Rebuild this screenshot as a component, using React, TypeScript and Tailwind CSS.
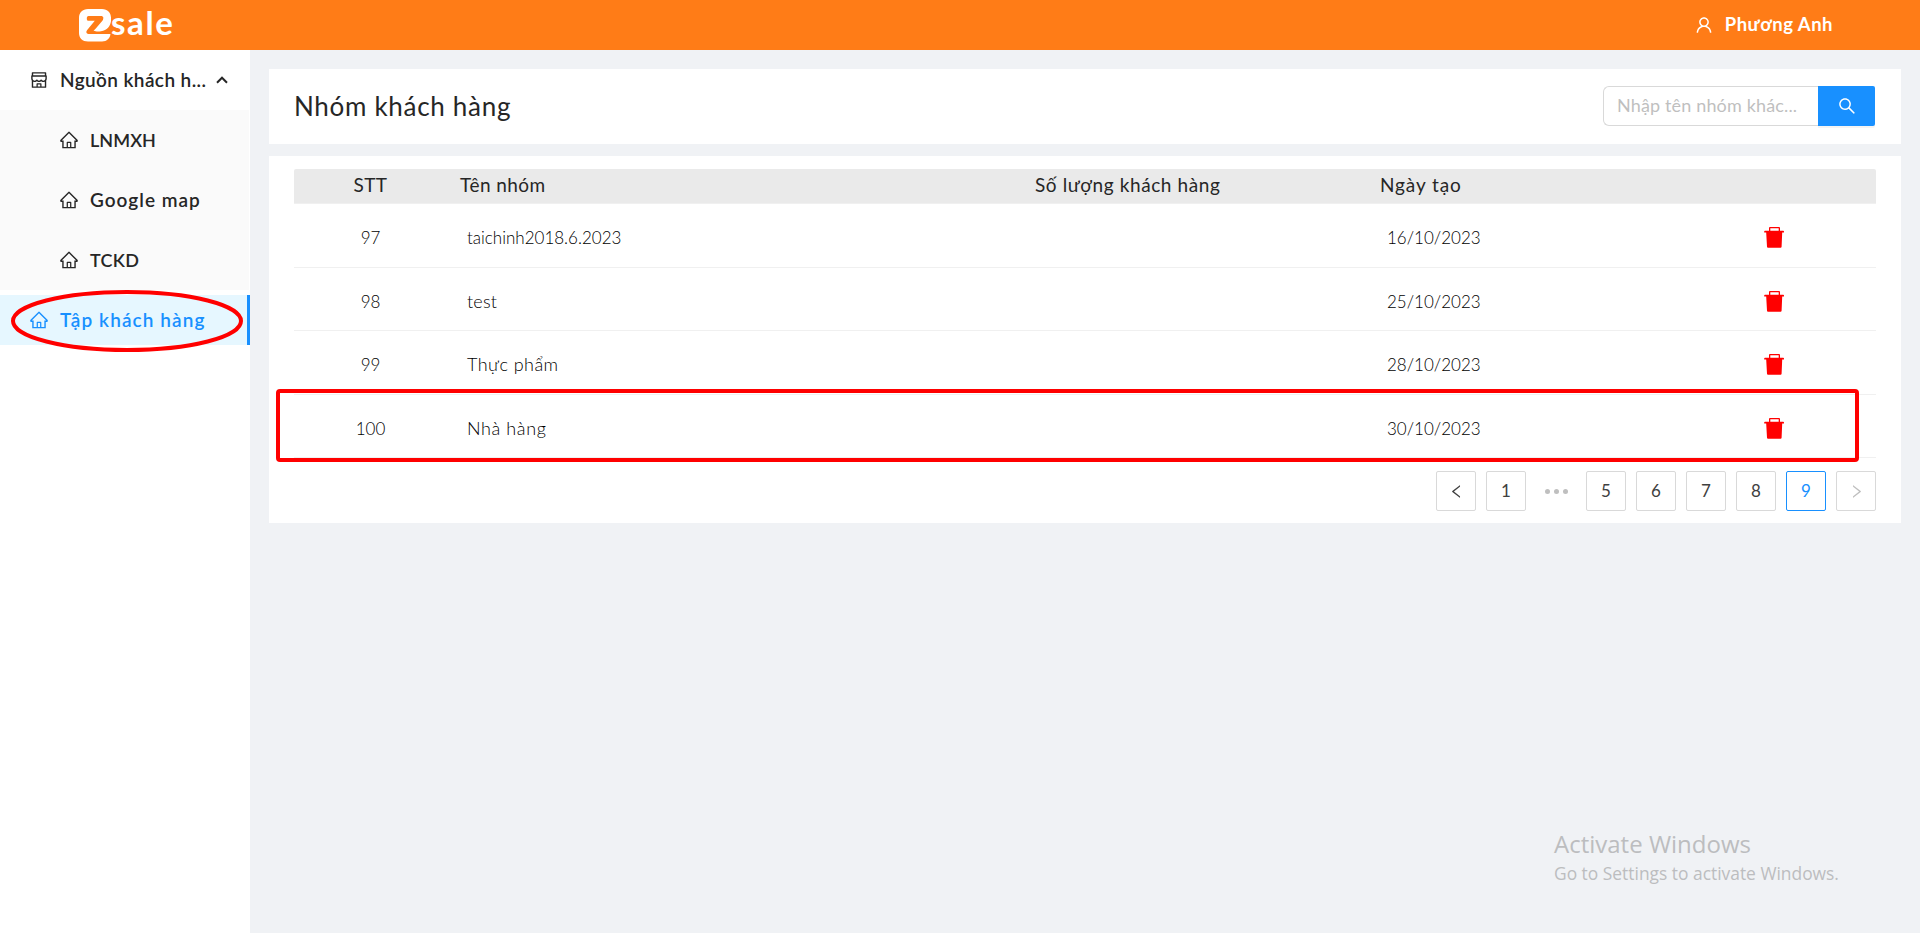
import type { ReactNode } from "react";
import {
  AiOutlineHome,
  AiOutlineLeft,
  AiOutlineRight,
  AiOutlineSearch,
  AiOutlineShop,
  AiOutlineUser,
} from "react-icons/ai";

const rows = [
  { id: 97, name: "taichinh2018.6.2023", date: "16/10/2023", nameClass: "tracking-normal" },
  { id: 98, name: "test", date: "25/10/2023", nameClass: "text-[18px] tracking-[0.2px]" },
  { id: 99, name: "Thực phẩm", date: "28/10/2023", nameClass: "text-[18px] tracking-[0.45px]" },
  { id: 100, name: "Nhà hàng", date: "30/10/2023", nameClass: "text-[18px] tracking-[0.6px]" },
];

const subItems = [
  { label: "LNMXH", className: "tracking-[0.05px]" },
  { label: "Google map", className: "text-[19px] tracking-[1px]" },
  { label: "TCKD", className: "tracking-[0.3px]" },
];

function TrashIcon() {
  return (
    <svg width="20" height="21" viewBox="0 0 20 21" fill="#ff0000">
      <path
        fillRule="evenodd"
        d="M5 1Q5 0 6 0H15Q16 0 16 1V3.700H19.200Q20 3.700 20 4.500V5.500H18.200L17.600 19.700Q17.500 20.700 16.600 20.700H4Q3.100 20.700 3 19.700L2.200 5.500H.2V4.500Q.2 3.700 1 3.700H5ZM6.300 1.300V3.700H14.700V1.300Z"
      />
    </svg>
  );
}

function Logo() {
  return (
    <div className="flex h-[50px] items-start pl-[79px] text-white">
      <svg className="mt-[9px] shrink-0" width="32" height="33" viewBox="0 0 32 33">
        <path
          fill="#fff"
          d="M9 0H23C28.500 0 32 3.500 32 9C32 16.500 28 20.500 22.500 24.800H31.500C31 29.500 28 32.500 23 32.500H9C3.500 32.500 0 29 0 24V9C0 3.500 3.500 0 9 0Z"
        />
        <path
          fill="#ff7c17"
          d="M9.500 7H22C24.600 7 25.200 9.500 23.600 11.400L15.500 21C20 21 23.500 20 26.500 17.500C29 15.500 30.500 14 32 11.500V25H9.500C7.200 25 6.800 22.800 8.200 21.100L15.800 11.800H9.500C8.300 11.800 7.800 10.800 7.800 9.400C7.800 8 8.300 7 9.500 7Z"
        />
        <path fill="#fff" d="M25 8H32V12C31.500 17 28 21.300 22 22.300C18.500 22.900 16.500 22.300 14.500 22L16 20.500C20 19 23.500 15 25 8Z" />
      </svg>
      <span className="mt-[2px] text-[33px] leading-[40px] font-bold tracking-[1.6px]">sale</span>
    </div>
  );
}

function PageButton({ children, className = "border-[#d9d9d9] text-[#404040]" }: { children: ReactNode; className?: string }) {
  return (
    <button className={`flex h-10 w-10 items-center justify-center rounded-[2px] border bg-white text-[17px] font-normal ${className}`}>
      {children}
    </button>
  );
}

export default function App() {
  return (
    <div className="relative flex h-[933px] w-[1920px] flex-col overflow-hidden bg-[#f0f2f5] font-['Lato','Noto_Sans',sans-serif] text-[#262626]">
      <header className="flex h-[50px] shrink-0 items-center justify-between bg-[#ff7c17] text-white">
        <Logo />
        <div className="flex items-center gap-[11px] pr-[87px] pb-px">
          <AiOutlineUser className="size-5" />
          <span className="text-[18.5px] font-bold tracking-[0.5px]">Phương Anh</span>
        </div>
      </header>

      <div className="flex min-h-0 flex-1">
        <aside className="relative w-[250px] shrink-0 bg-white text-[18px] font-semibold">
          <div className="flex h-[60px] items-center pl-[29px]">
            <AiOutlineShop className="size-5" />
            <span className="ml-[11px] w-[150px] text-[19px] tracking-[0.4px] whitespace-nowrap">Nguồn khách h...</span>
            <svg className="ml-[6px]" width="12" height="8" viewBox="0 0 12 8" fill="none" stroke="#262626" strokeWidth="2">
              <path d="M1 6.700L6 1.700L11 6.700" />
            </svg>
          </div>
          <div className="w-[249px] bg-[#fafafa]">
            {subItems.map((item) => (
              <div key={item.label} className="flex h-[60px] items-center gap-[11px] pl-[59px]">
                <AiOutlineHome className="size-5" />
                <span className={item.className}>{item.label}</span>
              </div>
            ))}
          </div>
          <div className="mt-[5px] flex h-[50px] items-center gap-[11px] border-r-[3px] border-[#1890ff] bg-[#e6f7ff] pl-[29px] text-[#1890ff]">
            <AiOutlineHome className="size-5" />
            <span className="text-[19px] tracking-[1.1px]">Tập khách hàng</span>
          </div>
          <svg className="absolute top-[239px] left-[10px]" width="234" height="64" fill="none">
            <ellipse cx="117" cy="32" rx="114" ry="29" stroke="#ff0000" strokeWidth="4" />
          </svg>
        </aside>

        <main className="relative flex-1 bg-[#f0f2f5] pt-[19px] pr-[19px] pl-[19px]">
          <section className="flex h-[75px] items-center justify-between bg-white pr-[26px] pb-[2px] pl-[25px]">
            <h1 className="pt-px text-[26px] font-normal tracking-[0.7px]">Nhóm khách hàng</h1>
            <div className="flex h-10">
              <div className="flex w-[215px] items-center rounded-l-[6px] border border-r-0 border-[#d9d9d9] pl-[13px] text-[18px] tracking-[0.15px] whitespace-nowrap text-[#bfbfbf]">
                Nhập tên nhóm khác...
              </div>
              <button className="flex w-[57px] items-center justify-center rounded-r-[2px] bg-[#1890ff] text-white shadow-[0_2px_0_rgba(0,0,0,0.045)]">
                <AiOutlineSearch className="size-5" />
              </button>
            </div>
          </section>

          <section className="mt-3 h-[367px] bg-white px-[25px] pt-[13px]">
            <div className="grid h-[35px] grid-cols-[153px_575px_345px_300px_1fr] items-center rounded-t-[2px] border-b border-[#f0f0f0] bg-[#eaeaea] pb-[2px] text-[19px]">
              <span className="text-center tracking-[0.4px]">STT</span>
              <span className="pl-[13px] tracking-[0.4px]">Tên nhóm</span>
              <span className="pl-[13px] tracking-[0.6px]">Số lượng khách hàng</span>
              <span className="pl-[13px] tracking-[0.9px]">Ngày tạo</span>
            </div>
            {rows.map((row) => (
              <div
                key={row.id}
                className="grid h-[63.5px] grid-cols-[153px_575px_345px_300px_1fr] items-center border-b border-[#f0f0f0] pt-[5px] text-[17px] font-light text-black"
              >
                <span className="text-center">{row.id}</span>
                <span className={`pl-5 ${row.nameClass}`}>{row.name}</span>
                <span />
                <span className="pl-5">{row.date}</span>
                <button className="flex justify-center pl-[5px]">
                  <TrashIcon />
                </button>
              </div>
            ))}
            <nav className="mt-[13px] flex justify-end gap-[10px]">
              <PageButton>
                <AiOutlineLeft className="size-[17px]" />
              </PageButton>
              <PageButton>1</PageButton>
              <span className="flex h-10 w-10 items-center justify-center gap-1">
                <i className="size-[5px] rounded-full bg-[#bfbfbf]" />
                <i className="size-[5px] rounded-full bg-[#bfbfbf]" />
                <i className="size-[5px] rounded-full bg-[#bfbfbf]" />
              </span>
              <PageButton>5</PageButton>
              <PageButton>6</PageButton>
              <PageButton>7</PageButton>
              <PageButton>8</PageButton>
              <PageButton className="border-[#1890ff] text-[#1890ff]">9</PageButton>
              <PageButton className="border-[#d9d9d9] text-[#bfbfbf]">
                <AiOutlineRight className="size-[17px]" />
              </PageButton>
            </nav>
          </section>

          <div className="absolute top-[339px] left-[26px] h-[73px] w-[1583px] rounded-[4px] border-4 border-[#ff0000]" />

          <div className="absolute top-[777px] left-[1304px] font-['Open_Sans',sans-serif] whitespace-nowrap text-[#bcbdbf]">
            <p className="text-[24px] leading-[34px]">Activate Windows</p>
            <p className="text-[17.4px] leading-[25px]">Go to Settings to activate Windows.</p>
          </div>
        </main>
      </div>
    </div>
  );
}
